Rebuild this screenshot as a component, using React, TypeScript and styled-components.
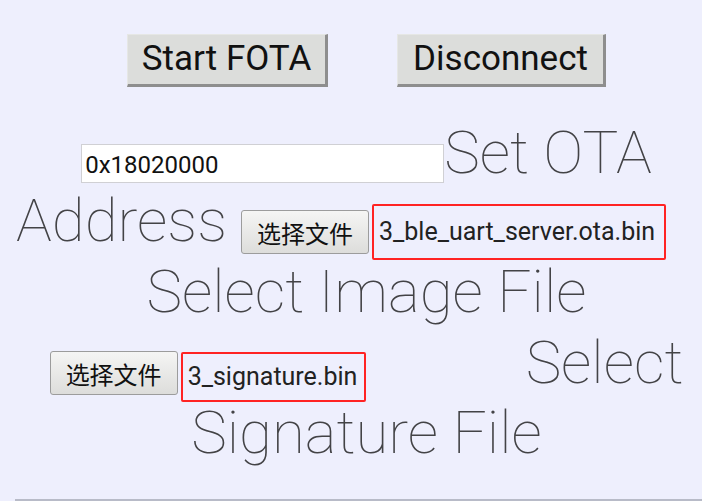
import React from "react";
import styled, { createGlobalStyle } from "styled-components";

const Global = createGlobalStyle`
  html, body { margin: 0; padding: 0; background: #eeeffd; }
  body { font-family: Roboto, "Noto Sans", sans-serif; overflow: hidden; }
`;

const Page = styled.div`
  display: flex;
  flex-direction: column;
  height: 501px;
  box-sizing: border-box;
  padding: 34px 0 0 31px;
`;

const Row = styled.div<{ $top?: number; $gap?: number; $padRight?: number }>`
  display: flex;
  justify-content: center;
  align-items: flex-start;
  margin-top: ${(p) => p.$top ?? 0}px;
  gap: ${(p) => p.$gap ?? 0}px;
  padding-right: ${(p) => p.$padRight ?? 0}px;
  & > * { flex-shrink: 0; }
`;

const RaisedButton = styled.button<{ $w: number }>`
  width: ${(p) => p.$w}px;
  height: 53px;
  box-sizing: border-box;
  background: #dcdddb;
  border-top: 1px solid #e6e7e5;
  border-left: 1px solid #e6e7e5;
  border-right: 3px solid #8e8e8e;
  border-bottom: 3px solid #8e8e8e;
  border-radius: 0;
  padding: 0 0 2px;
  font-family: Roboto, sans-serif;
  font-size: 35px;
  color: #111;
`;

const BigLabel = styled.span`
  font-family: Roboto, sans-serif;
  font-weight: 100;
  font-size: 60px;
  line-height: 64px;
  color: #434346;
  white-space: nowrap;
`;

const AddressInput = styled.input`
  width: 363px;
  height: 39px;
  box-sizing: border-box;
  margin-top: 23px;
  border: 1px solid #d0d0d4;
  background: #fff;
  font-family: Roboto, sans-serif;
  font-size: 24px;
  color: #111;
  padding: 2px 3px 0;
  outline: none;
`;

const FileButton = styled.button<{ $top: number; $left?: number }>`
  width: 128px;
  height: 44px;
  box-sizing: border-box;
  margin-top: ${(p) => p.$top}px;
  margin-left: ${(p) => p.$left ?? 0}px;
  background: linear-gradient(#f5f5f4, #dddddb);
  border: 1px solid #9c9c9c;
  border-radius: 3px;
  font-family: Roboto, "Noto Sans CJK SC", sans-serif;
  font-size: 24px;
  color: #111;
  padding: 0;
`;

const FileName = styled.div<{ $top: number; $w: number; $h: number }>`
  display: flex;
  align-items: center;
  box-sizing: border-box;
  width: ${(p) => p.$w}px;
  height: ${(p) => p.$h}px;
  margin-top: ${(p) => p.$top}px;
  margin-left: 3px;
  border: 2px solid #ff2323;
  border-radius: 2px;
  padding: 0 0 2px 5px;
  font-family: Roboto, sans-serif;
  font-size: 25px;
  color: #222;
  white-space: nowrap;
`;

const Spacer = styled.div`
  width: 160px;
`;

const BottomRule = styled.div`
  margin: auto 0 0 -16px;
  height: 2px;
  background: #b8bbc8;
`;

export default function App() {
  return (
    <>
      <Global />
      <Page>
        <Row $gap={69}>
          <RaisedButton $w={201}>Start FOTA</RaisedButton>
          <RaisedButton $w={209}>Disconnect</RaisedButton>
        </Row>
        <Row $top={34}>
          <AddressInput defaultValue="0x18020000" />
          <BigLabel>Set OTA</BigLabel>
        </Row>
        <Row $top={4} $padRight={51}>
          <BigLabel>Address</BigLabel>
          <FileButton $top={21} $left={14}>选择文件</FileButton>
          <FileName $top={15} $w={294} $h={56}>3_ble_uart_server.ota.bin</FileName>
        </Row>
        <Row $top={0}>
          <BigLabel>Select Image File</BigLabel>
        </Row>
        <Row $top={7}>
          <FileButton $top={20}>选择文件</FileButton>
          <FileName $top={21} $w={185} $h={50}>3_signature.bin</FileName>
          <Spacer />
          <BigLabel>Select</BigLabel>
        </Row>
        <Row $top={-1}>
          <BigLabel>Signature File</BigLabel>
        </Row>
        <BottomRule />
      </Page>
    </>
  );
}
